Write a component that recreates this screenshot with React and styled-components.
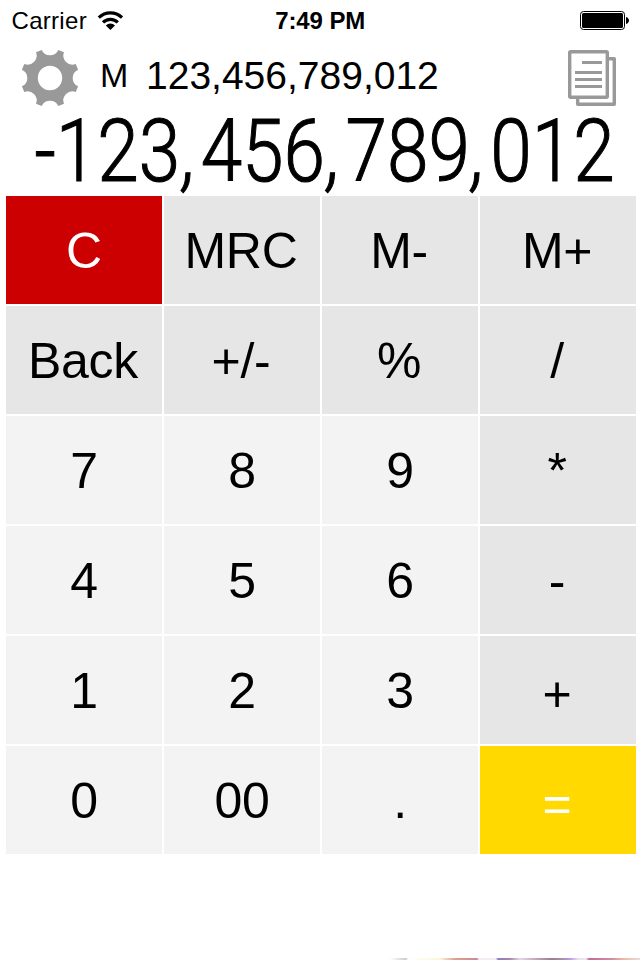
import React from 'react';
import styled, { createGlobalStyle, css } from 'styled-components';

const GlobalStyle = createGlobalStyle`
  * {
    box-sizing: border-box;
  }

  body {
    margin: 0;
    background-color: #fff;
    color: #000;
    font-family: 'Liberation Sans', Arial, sans-serif;
  }
`;

const Screen = styled.div`
  display: flex;
  flex-direction: column;
  width: 640px;
  height: 960px;
  overflow: hidden;
  background-color: #fff;
`;

const StatusBar = styled.header`
  display: grid;
  grid-template-columns: 1fr auto 1fr;
  align-items: center;
  height: 40px;
  padding: 1px 11px 0 11.5px;
  font-size: 24px;
  line-height: 40px;
`;

const Carrier = styled.div`
  display: flex;
  align-items: center;
  gap: 10px;
  letter-spacing: 0.3px;
`;

const Clock = styled.span`
  font-weight: bold;
  letter-spacing: -0.1px;
`;

const Battery = styled.svg`
  justify-self: end;
`;

const MemoryRow = styled.div`
  display: flex;
  align-items: flex-start;
  height: 70px;
  padding: 8px 23px 0 20px;
`;

const IconButton = styled.button`
  display: flex;
  padding: 0;
  border: 0;
  background: transparent;
  color: #999;
`;

const MemoryLabel = styled.span`
  width: 46px;
  margin-left: 20px;
  font-size: 34px;
  line-height: 54px;
`;

const MemoryValue = styled.span`
  flex: 1;
  font-size: 39px;
  line-height: 56px;
`;

const Display = styled.div`
  display: flex;
  justify-content: flex-end;
  height: 86px;
  padding-right: 25px;
`;

const DisplayValue = styled.div`
  flex: none;
  font-family: Roboto, sans-serif;
  font-weight: 300;
  font-size: 88px;
  line-height: 82px;
  white-space: nowrap;
  transform: scaleX(0.85);
  transform-origin: right center;
  -webkit-text-stroke: 1.1px #000;
`;

const Separator = styled.span`
  display: inline-block;
  padding: 0 5px 0 2px;
  transform: skewX(-6deg);
`;

const Keypad = styled.main`
  display: grid;
  grid-template-columns: repeat(4, 156px);
  grid-auto-rows: 108px;
  gap: 2px;
  padding-left: 6px;
`;

const keyKinds = {
  digit: css`
    background-color: #f3f3f3;
  `,
  action: css`
    padding-right: 2px;
    background-color: #e6e6e6;
  `,
  clear: css`
    background-color: #c00;
    color: #fff;
  `,
  equals: css`
    padding-right: 2px;
    background-color: #ffd900;
    color: #fff;
  `,
};

const Key = styled.button`
  padding: ${({ $low }) => ($low ? '8px' : '2px')} 0 0;
  border: 0;
  color: #000;
  font-family: inherit;
  font-size: 50px;
  line-height: ${({ $low }) => ($low ? '100px' : '106px')};
  letter-spacing: -0.3px;
  ${({ $kind }) => keyKinds[$kind]}
`;

const AdStrip = styled.footer`
  height: 2px;
  margin-top: auto;
  background: linear-gradient(
    90deg,
    #fff 390px,
    #ccc 406px,
    #fff 408px,
    #fbf6d8 440px,
    #dfa08e 455px,
    #c98a98 477px,
    #f5eef3 479px,
    #f3ebf4 496px,
    #8c7cc0 498px,
    #a888ac 510px,
    #e3d8e8 520px,
    #c8a6bd 535px,
    #98808c 552px,
    #b294b0 565px,
    #b79af0 570px,
    #eadff0 578px,
    #f0e6f0 586px,
    #c76a92 589px,
    #d18ca9 612px,
    #e8b79e 622px,
    #efd9dc 640px
  );
`;

const keys = [
  ['C', 'clear'],
  ['MRC', 'action'],
  ['M-', 'action'],
  ['M+', 'action'],
  ['Back', 'action'],
  ['+/-', 'action'],
  ['%', 'action'],
  ['/', 'action'],
  ['7', 'digit'],
  ['8', 'digit'],
  ['9', 'digit'],
  ['*', 'action'],
  ['4', 'digit'],
  ['5', 'digit'],
  ['6', 'digit'],
  ['-', 'action'],
  ['1', 'digit'],
  ['2', 'digit'],
  ['3', 'digit'],
  ['+', 'action'],
  ['0', 'digit'],
  ['00', 'digit'],
  ['.', 'digit'],
  ['=', 'equals'],
];

// eight teeth, with a round notch between each pair
const gearPath = (() => {
  const point = (deg) => {
    const a = (deg * Math.PI) / 180;
    return `${(30 + 29.3 * Math.sin(a)).toFixed(2)} ${(30 - 29.3 * Math.cos(a)).toFixed(2)}`;
  };
  let d = `M${point(-16.5)}`;
  for (let i = 0; i < 8; i += 1) {
    d += `A9.1 9.1 0 0 0 ${point(i * 45 + 16.5)}L${point(i * 45 + 28.5)}`;
  }
  return `${d}ZM30 17.8a12.2 12.2 0 1 0 0 24.4a12.2 12.2 0 1 0 0-24.4Z`;
})();

function WifiIcon() {
  return (
    <svg width="26" height="20" viewBox="0 0 26 20" fill="none" stroke="#000" strokeWidth="3.2">
      <path d="M1.8 6.6A16.5 16.5 0 0 1 25 6.6" />
      <path d="M6 11.4A10.4 10.4 0 0 1 20.8 11.4" />
      <path d="M13.4 19L8.8 14.6A6 6 0 0 1 18 14.6Z" fill="#000" stroke="none" />
    </svg>
  );
}

function BatteryIcon() {
  return (
    <Battery width="49" height="20" viewBox="0 0 49 20">
      <rect x="0.5" y="0.5" width="44" height="18" rx="3" fill="none" stroke="#000" />
      <rect x="2" y="2" width="41" height="15" rx="1.5" fill="#000" />
      <path d="M46 6c4 1.2 4 5.8 0 7Z" fill="#000" />
    </Battery>
  );
}

function GearIcon() {
  return (
    <svg width="60" height="60" viewBox="0 0 60 60">
      <path d={gearPath} fill="currentColor" fillRule="evenodd" />
    </svg>
  );
}

function HistoryIcon() {
  return (
    <svg width="50" height="60" viewBox="0 0 50 60" fill="none" stroke="currentColor" strokeWidth="3.4">
      <rect x="2.7" y="3.7" width="37.6" height="45.6" rx="1" />
      <path d="M42 10.7H47.3V56.3H10.7V51" strokeLinejoin="round" />
      <path d="M15 14.5H35M8 24.5H35M8 31.5H35M8 38.5H35" strokeWidth="3" />
    </svg>
  );
}

function DisplayNumber({ value }) {
  return (
    <DisplayValue>
      {value.split(',').map((group, i) => (
        <React.Fragment key={i}>
          {i > 0 && <Separator>,</Separator>}
          {group}
        </React.Fragment>
      ))}
    </DisplayValue>
  );
}

function App() {
  return (
    <>
      <GlobalStyle />
      <Screen>
        <StatusBar>
          <Carrier>
            <span>Carrier</span>
            <WifiIcon />
          </Carrier>
          <Clock>7:49 PM</Clock>
          <BatteryIcon />
        </StatusBar>
        <MemoryRow>
          <IconButton type="button" aria-label="settings">
            <GearIcon />
          </IconButton>
          <MemoryLabel>M</MemoryLabel>
          <MemoryValue>123,456,789,012</MemoryValue>
          <IconButton type="button" aria-label="history">
            <HistoryIcon />
          </IconButton>
        </MemoryRow>
        <Display>
          <DisplayNumber value="-123,456,789,012" />
        </Display>
        <Keypad>
          {keys.map(([label, kind]) => (
            <Key key={label} type="button" $kind={kind} $low={label === '+' || label === '='}>
              {label}
            </Key>
          ))}
        </Keypad>
        <AdStrip />
      </Screen>
    </>
  );
}

export default App;
